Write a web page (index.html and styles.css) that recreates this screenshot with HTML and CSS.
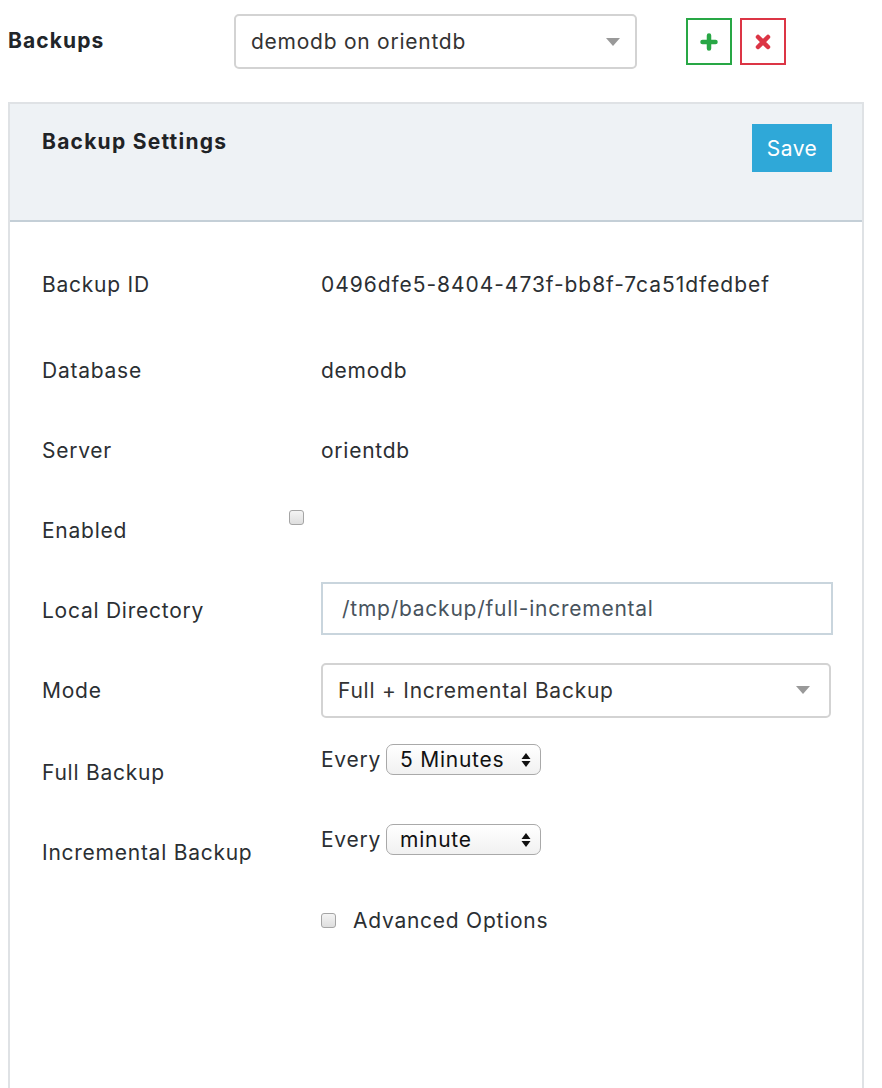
FILE: index.html
```html
<!DOCTYPE html>
<html lang="en">
<head>
<meta charset="utf-8">
<title>Backups</title>
<link rel="stylesheet" href="styles.css">
</head>
<body>
<div class="topbar">
  <div class="page-title">Backups</div>
  <div class="select big-select">
    <span>demodb on orientdb</span>
    <svg class="caret" width="14" height="8" viewBox="0 0 14 8"><path d="M0 0h14L7 8z" fill="#999"/></svg>
  </div>
  <div class="icon-btn add">
    <svg width="18" height="18" viewBox="0 0 18 18"><path d="M9 2.5v13M2.5 9h13" stroke="#28a745" stroke-width="4.5" stroke-linecap="round"/></svg>
  </div>
  <div class="icon-btn remove">
    <svg width="16" height="16" viewBox="0 0 16 16"><path d="M3 3l10 10M13 3L3 13" stroke="#dc3545" stroke-width="4.5" stroke-linecap="round"/></svg>
  </div>
</div>

<div class="panel">
  <div class="panel-header">
    <div class="panel-title">Backup Settings</div>
    <div class="save-btn">Save</div>
  </div>
  <div class="panel-body">
    <div class="row row-first">
      <div class="label">Backup ID</div>
      <div class="value uuid">0496dfe5-8404-473f-bb8f-7ca51dfedbef</div>
    </div>
    <div class="row">
      <div class="label">Database</div>
      <div class="value">demodb</div>
    </div>
    <div class="row">
      <div class="label">Server</div>
      <div class="value">orientdb</div>
    </div>
    <div class="row">
      <div class="label">Enabled</div>
      <div class="value value-top value-enabled"><span class="checkbox shifted"></span></div>
    </div>
    <div class="row">
      <div class="label">Local Directory</div>
      <div class="value"><div class="text-input">/tmp/backup/full-incremental</div></div>
    </div>
    <div class="row">
      <div class="label">Mode</div>
      <div class="value">
        <div class="select mode-select">
          <span>Full + Incremental Backup</span>
          <svg class="caret" width="14" height="8" viewBox="0 0 14 8"><path d="M0 0h14L7 8z" fill="#999"/></svg>
        </div>
      </div>
    </div>
    <div class="row">
      <div class="label label-low">Full Backup</div>
      <div class="value value-top value-every">
        <span class="every">Every</span>
        <div class="mini-select">
          <span>5 Minutes</span>
          <svg width="10" height="16" viewBox="0 0 10 16"><path d="M5 1L9.5 7H0.5z M5 15L9.5 9H0.5z" fill="#111"/></svg>
        </div>
      </div>
    </div>
    <div class="row">
      <div class="label label-low">Incremental Backup</div>
      <div class="value value-top value-every">
        <span class="every">Every</span>
        <div class="mini-select">
          <span>minute</span>
          <svg width="10" height="16" viewBox="0 0 10 16"><path d="M5 1L9.5 7H0.5z M5 15L9.5 9H0.5z" fill="#111"/></svg>
        </div>
      </div>
    </div>
    <div class="row row-short">
      <div class="label"></div>
      <div class="value">
        <span class="checkbox"></span>
        <span class="adv-text">Advanced Options</span>
      </div>
    </div>
  </div>
</div>
</body>
</html>
```

FILE: styles.css
```css
html, body {
  margin: 0;
  padding: 0;
  background: #ffffff;
}
body {
  padding: 8px 0 0 8px;
  width: 856px;
  font-family: Inter, "Liberation Sans", sans-serif;
  font-size: 21px;
  letter-spacing: 0.75px;
  color: #2b2f33;
  overflow: hidden;
  height: 1080px;
}

/* top bar */
.topbar {
  display: flex;
  align-items: center;
  padding-top: 6px;
  height: 55px;
}
.page-title {
  width: 226px;
  font-weight: 700;
  font-size: 21px;
  letter-spacing: 1.1px;
  color: #212529;
  margin-top: -2px;
}
.select {
  display: flex;
  align-items: center;
  justify-content: space-between;
  box-sizing: border-box;
  border: 2px solid #d3d3d3;
  border-radius: 5px;
  background: #fff;
  color: #333;
}
.big-select {
  width: 403px;
  height: 55px;
  padding: 0 15px 0 15px;
}
.caret {
  flex: none;
}
.icon-btn {
  box-sizing: border-box;
  width: 46px;
  height: 47px;
  display: flex;
  align-items: center;
  justify-content: center;
  background: #fff;
}
.icon-btn.add {
  border: 2px solid #28a745;
  margin-left: 49px;
}
.icon-btn.remove {
  border: 2px solid #dc3545;
  margin-left: 8px;
}

/* panel */
.panel {
  margin-top: 33px;
  border: 2px solid #dfe2e5;
  border-bottom: none;
  min-height: 1000px;
}
.panel-header {
  height: 96px;
  background: #eef2f5;
  border-bottom: 2px solid #c4cfd7;
  display: flex;
  justify-content: space-between;
  align-items: flex-start;
  padding: 20px 30px 0 32px;
}
.panel-title {
  margin-top: 5px;
  line-height: 26px;
  font-weight: 700;
  font-size: 21px;
  letter-spacing: 1.25px;
  color: #1f2326;
}
.save-btn {
  width: 80px;
  height: 48px;
  background: #2fa8d8;
  color: #fff;
  display: flex;
  align-items: center;
  justify-content: center;
  font-size: 21px;
  letter-spacing: 0.5px;
}

.panel-body {
  padding: 22px 30px 0 32px;
}
.row {
  display: flex;
  align-items: center;
  height: 80px;
}
.row-first {
  margin-bottom: 6px;
}
.row-short {
  height: 60px;
}
.label {
  width: 279px;
  flex: none;
}
.label-low {
  margin-top: 4px;
}
.value {
  flex: 1;
  display: flex;
  align-items: center;
}
.uuid {
  letter-spacing: 0.95px;
}
.value-top {
  align-self: flex-start;
}
.value-enabled {
  padding-top: 20px;
}
.value-every {
  padding-top: 14px;
}
.checkbox {
  display: inline-block;
  box-sizing: border-box;
  width: 15px;
  height: 15px;
  border: 1px solid #a5a5a5;
  border-radius: 3px;
  background: linear-gradient(#f4f4f4, #dedede);
  flex: none;
}
.checkbox.shifted {
  margin-left: -32px;
}
.adv-text {
  margin-left: 17px;
}
.text-input {
  box-sizing: border-box;
  width: 512px;
  height: 53px;
  margin-bottom: 3px;
  border: 2px solid #c9d5dd;
  display: flex;
  align-items: center;
  padding-left: 19px;
  color: #48535d;
}
.mode-select {
  width: 510px;
  height: 55px;
  padding: 0 19px 0 15px;
}
.every {
  margin-right: 5px;
}
.mini-select {
  box-sizing: border-box;
  width: 155px;
  height: 31px;
  border: 1px solid #a9a9a9;
  border-radius: 7px;
  background: linear-gradient(#ffffff, #f1f1f1);
  display: flex;
  align-items: center;
  justify-content: space-between;
  padding: 0 9px 0 13px;
  font-size: 21px;
  color: #111;
}
```
